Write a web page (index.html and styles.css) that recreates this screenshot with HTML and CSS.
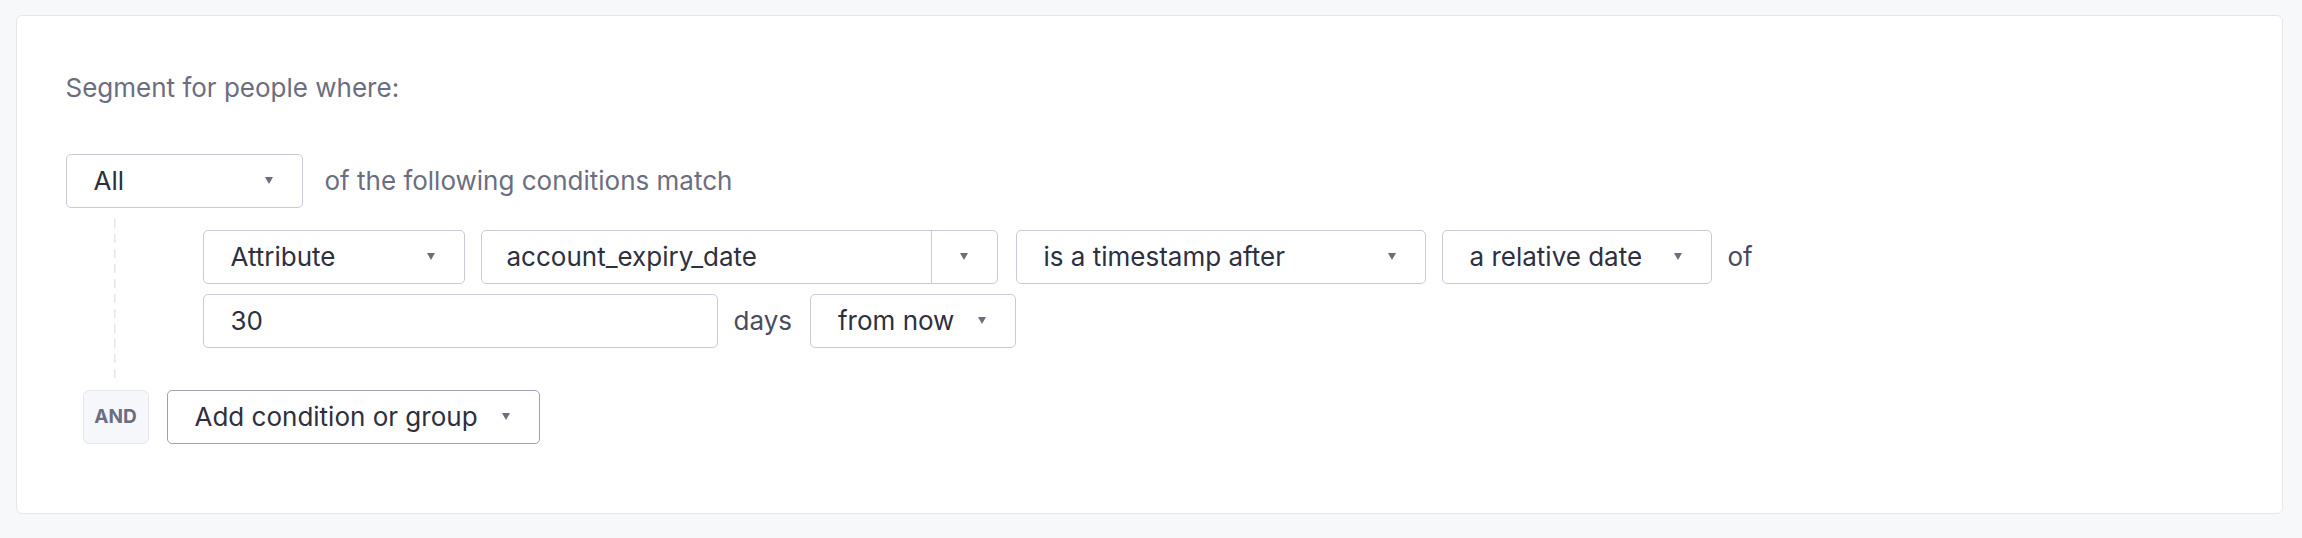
FILE: index.html
```html
<!DOCTYPE html>
<html lang="en">
<head>
<meta charset="utf-8">
<title>Segment builder</title>
<link rel="stylesheet" href="styles.css">
</head>
<body>
<div class="card">
  <div class="title">Segment for people where:</div>
  <div class="match-row">
    <div class="select w-all"><span>All</span><i class="caret"></i></div>
    <span class="muted">of the following conditions match</span>
  </div>
  <div class="conditions">
    <div class="row">
      <div class="select w-attr"><span>Attribute</span><i class="caret"></i></div>
      <div class="combo w-acct"><span class="combo-text">account_expiry_date</span><span class="combo-btn"><i class="caret"></i></span></div>
      <div class="select w-op"><span>is a timestamp after</span><i class="caret"></i></div>
      <div class="select w-rel"><span>a relative date</span><i class="caret"></i></div>
      <span class="label">of</span>
    </div>
    <div class="row">
      <div class="input w-num">30</div>
      <span class="label">days</span>
      <div class="select w-from"><span>from now</span><i class="caret"></i></div>
    </div>
  </div>
  <div class="add-row">
    <div class="and">AND</div>
    <div class="select add w-add"><span>Add condition or group</span><i class="caret"></i></div>
  </div>
</div>
</body>
</html>
```

FILE: styles.css
```css
html, body {
  margin: 0;
  padding: 0;
}
body {
  background: #f7f8fa;
  font-family: Inter, "Noto Sans", "Liberation Sans", sans-serif;
  padding: 15px 19px 24px 16px;
}
.card {
  box-sizing: border-box;
  height: 499px;
  background: #fff;
  border: 1.5px solid #e6e7ee;
  border-radius: 6px;
  padding: 51.5px 0 0 48.5px;
}
.title {
  height: 40px;
  line-height: 40px;
  font-size: 26px;
  color: #6b6e80;
}
.match-row {
  margin-top: 46px;
  display: flex;
  align-items: center;
  gap: 22px;
}
.muted {
  font-size: 26px;
  color: #6b6e80;
}
.select, .input, .combo {
  box-sizing: border-box;
  height: 54px;
  border: 1.5px solid #c9cad6;
  border-radius: 5px;
  background: #fff;
  font-size: 26px;
  color: #2e3040;
  display: flex;
  align-items: center;
}
.select {
  justify-content: space-between;
  padding: 0 29px 0 27px;
}
.input {
  padding: 0 27px;
}
.caret {
  display: block;
  width: 0;
  height: 0;
  border-left: 4.5px solid transparent;
  border-right: 4.5px solid transparent;
  border-top: 7px solid #6b6d80;
}
.w-all { width: 237px; }
.w-attr { width: 262px; }
.w-acct { width: 517px; }
.w-op { width: 410px; }
.w-rel { width: 270px; }
.w-num { width: 515px; }
.w-from { width: 206px; }
.w-add { width: 373px; }
.combo {
  padding: 0;
}
.combo-text {
  flex: 1;
  padding-left: 25px;
}
.combo-btn {
  width: 65px;
  height: 100%;
  border-left: 1.5px solid #c9cad6;
  display: flex;
  align-items: center;
  justify-content: center;
}
.conditions {
  margin: 11px 0 0 48px;
  padding: 11px 0 33px 89px;
  background: repeating-linear-gradient(to bottom, #e4e5eb 0 9px, transparent 9px 15px) left top / 1.5px 100% no-repeat;
  display: flex;
  flex-direction: column;
  gap: 10px;
}
.row {
  display: flex;
  align-items: center;
  gap: 16px;
}
.row .w-op { margin-left: 2px; }
.label {
  font-size: 26px;
  color: #4a4c5d;
}
.row .label + .select { margin-left: 2px; }
.add-row {
  margin: 9px 0 0 17px;
  display: flex;
  align-items: center;
  gap: 18px;
}
.and {
  box-sizing: border-box;
  width: 66px;
  height: 54px;
  border: 1.5px solid #e6e7ee;
  border-radius: 6px;
  background: #f6f7fa;
  color: #6b6e82;
  font-size: 19px;
  font-weight: 700;
  display: flex;
  align-items: center;
  justify-content: center;
}
.add {
  border-color: #9fa1b2;
}
```
